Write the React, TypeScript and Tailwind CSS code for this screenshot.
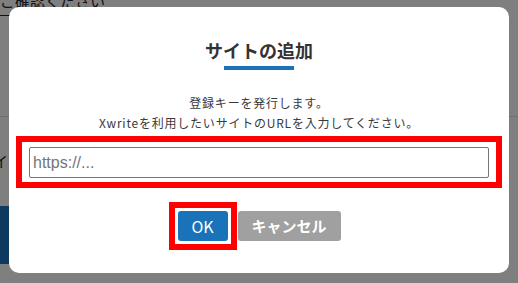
export default function App() {
  return (
    <div className="relative h-[283px] w-[518px] overflow-hidden bg-white font-['Noto_Sans_CJK_JP',sans-serif] text-[#333]">
      {/* page behind the dialog */}
      <div className="-mt-[9px] text-[15px] leading-[20px] text-[#222]">ご確認ください</div>
      <div className="mt-[4px] h-px w-[40px] bg-[#222]" />
      <div className="mt-[100px] h-px w-full bg-[#ddd]" />
      <div className="mt-[34px] -ml-[7px] text-[15px] leading-[20px] text-[#222]">イト</div>
      <div className="mt-[35px] h-[58px] w-[30px] bg-[#1a74bc]" />

      {/* overlay */}
      <div className="absolute inset-0 flex justify-center bg-black/50 pt-[7px]">
        <div className="h-[266px] w-[500px] rounded-[10px] bg-white text-center">
          <h2 className="pt-[30px] text-[18px] font-bold leading-[27px] text-[#333]">
            サイトの追加
          </h2>
          <div className="mx-auto mt-[2px] h-[4px] w-[70px] bg-[#1a73b8]" />
          <p className="mt-[23px] text-[12px] leading-[20px] tracking-[0.065em] text-[#3a3a3a]">
            登録キーを発行します。
            <br />
            Xwriteを利用したいサイトのURLを入力してください。
          </p>
          <div className="mx-[7px] mt-[3px] border-[6px] border-[#ff0000] px-[7px] pb-[4px] pt-[5px]">
            <input
              type="text"
              placeholder="https://..."
              className="block h-[31px] w-full rounded-[2px] border border-[#767676] px-[3px] font-['Liberation_Sans',sans-serif] text-[16px] text-[#333] placeholder:text-[#757575] focus:outline-none"
            />
          </div>
          <div className="mt-[23px] flex justify-center gap-[10px]">
            <span className="-m-[9px] inline-flex border-[6px] border-[#ff0000] p-[3px]">
              <button className="h-[30px] w-[50px] rounded-[3px] bg-[#1a73b8] text-[16px] leading-[30px] text-white">
                OK
              </button>
            </span>
            <button className="h-[30px] w-[103px] rounded-[3px] bg-[#a0a0a0] text-[15px] font-bold leading-[30px] text-white">
              キャンセル
            </button>
          </div>
        </div>
      </div>
    </div>
  );
}
